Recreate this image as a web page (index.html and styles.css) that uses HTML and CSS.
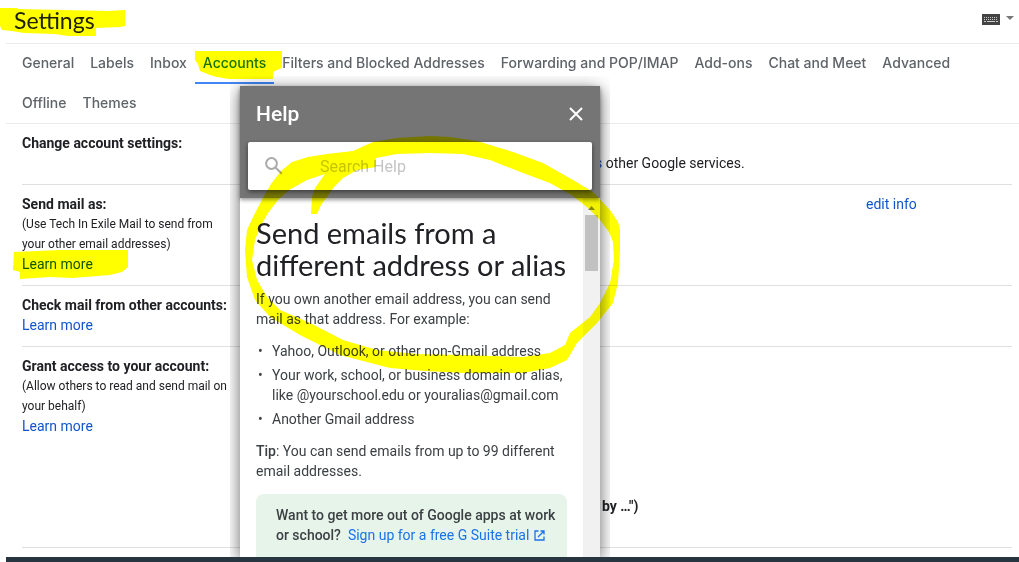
FILE: index.html
```html
<!DOCTYPE html>
<html lang="en">
<head>
  <meta charset="UTF-8">
  <meta name="viewport" content="width=device-width, initial-scale=1.0">
  <title>Settings - Accounts</title>
  <link rel="stylesheet" href="styles.css">
</head>
<body>
  <div class="page">
    <header class="top-bar">
      <h1>Settings</h1>
      <button class="input-tools" aria-label="Input tools">
        <svg width="18" height="12" viewBox="0 0 18 12">
          <rect width="18" height="11" fill="#444"/>
          <path d="M2 3.5h14M2 5.5h14" stroke="#ccc" stroke-width="1" stroke-dasharray="1 1"/>
          <path d="M2 7.5h2M5 7.5h8M14 7.5h2" stroke="#ccc"/>
        </svg>
        <svg width="8" height="5" viewBox="0 0 8 5"><path d="M0 0h8L4 4z" fill="#777"/></svg>
      </button>
    </header>

    <nav class="tabs">
      <a href="#">General</a>
      <a href="#">Labels</a>
      <a href="#">Inbox</a>
      <a href="#" class="active">Accounts</a>
      <a href="#">Filters and Blocked Addresses</a>
      <a href="#">Forwarding and POP/IMAP</a>
      <a href="#">Add-ons</a>
      <a href="#">Chat and Meet</a>
      <a href="#">Advanced</a>
      <a href="#">Offline</a>
      <a href="#">Themes</a>
    </nav>

    <main class="settings">
      <section class="row">
        <div class="label">
          <h2>Change account settings:</h2>
        </div>
        <p class="value second-line"><a href="#">s</a> other Google services.</p>
      </section>

      <section class="row">
        <div class="label">
          <h2>Send mail as:</h2>
          <p>(Use Tech In Exile Mail to send from your other email addresses)</p>
          <a href="#">Learn more</a>
        </div>
        <div class="action"><a href="#">edit info</a></div>
      </section>

      <section class="row">
        <div class="label">
          <h2>Check mail from other accounts:</h2>
          <a href="#">Learn more</a>
        </div>
      </section>

      <section class="row">
        <div class="label">
          <h2>Grant access to your account:</h2>
          <p>(Allow others to read and send mail on your behalf)</p>
          <a href="#">Learn more</a>
        </div>
        <p class="value sender">by …")</p>
      </section>
    </main>

    <footer class="bottom-bar"></footer>

    <div class="help-frame">
      <div class="help" role="dialog" aria-label="Help">
        <div class="help-header">
          <div class="help-title">
            <h2>Help</h2>
            <button aria-label="Close">
              <svg width="14" height="14" viewBox="0 0 14 14"><path d="M1 1l12 12M13 1L1 13" stroke="#fff" stroke-width="2"/></svg>
            </button>
          </div>
          <label class="search">
            <svg width="18" height="18" viewBox="0 0 18 18" fill="none" stroke="#aaa" stroke-width="2">
              <circle cx="6.5" cy="6.5" r="5.4"/>
              <path d="M10.5 10.5l6.3 6.3"/>
            </svg>
            <input type="text" placeholder="Search Help" aria-label="Search Help">
          </label>
        </div>
        <div class="help-body">
          <article>
            <h3>Send emails from a different address or alias</h3>
            <p>If you own another email address, you can send mail as that address. For example:</p>
            <ul>
              <li>Yahoo, Outlook, or other non-Gmail address</li>
              <li>Your work, school, or business domain or alias, like @yourschool.edu or youralias@gmail.com</li>
              <li>Another Gmail address</li>
            </ul>
            <p><b>Tip</b>: You can send emails from up to 99 different email addresses.</p>
            <div class="promo">
              <b>Want to get more out of Google apps at work or school?</b>&nbsp;
              <a href="#">Sign up for a free G Suite trial
                <svg width="12" height="11" viewBox="0 0 12 11" fill="none" stroke="#1a73e8" stroke-width="1.3"><path d="M5.5 1H2v9h9V6.5M7.5 1H11v3.5M11 1L5 7"/></svg></a>
            </div>
          </article>
          <div class="scrollbar">
            <svg width="7" height="4" viewBox="0 0 7 4"><path d="M0 4L3.5 0L7 4z" fill="#888"/></svg>
            <div class="thumb"></div>
          </div>
        </div>
      </div>
    </div>

    <!-- highlighter strokes -->
    <svg class="marker" width="640" height="400" viewBox="0 0 640 400" fill="#ff0">
      <path d="M0 8H17L18 9L108 11L125 10V26L120 27L96 28V36L68 36L55 34L24 33L12 31L2 30L0 26z"/>
      <path d="M195 51H282V68L277 70L273 72V79L229 79L217 77L210 75L200 71L198 64L195 60z"/>
      <path d="M14 252L60 250L128 250V267L122 272L110 275L85 277L72 278L50 277L20 279V272L13 270z"/>
      <path fill-rule="evenodd" d="M247 230L255 213L263 198L271 184L281 171L292 162L308 157L327 154L353 151L373 142L397 138L430 136L450 137L477 141L513 152L543 163L573 180L593 192L610 210L618 222L620 230V250L618 283L613 303L597 323L577 343L567 360L550 368L523 373H463L425 371L390 368L340 355L300 335L270 317L255 300L247 277L245 250z
        M252 260L255 240L260 227L268 213L278 200L289 190L307 180L325 174L315 188L312 197L311 214H317L321 205L327 197L334 187L343 178L357 170L376 167V158L397 154L430 153L463 154L490 160L523 173L550 183L573 196L588 208L600 220L609 232L613 242L614 260L610 283L600 303L590 317L570 333L565 345L550 353L523 357L463 355L417 354L377 350L343 340L310 323L280 310L267 297L257 280z"/>
    </svg>
  </div>
</body>
</html>
```

FILE: styles.css
```css
* {
  margin: 0;
  padding: 0;
  box-sizing: border-box;
}

body {
  font-family: Roboto, "Liberation Sans", sans-serif;
  font-size: 14px;
  line-height: 20px;
  color: #202124;
  background: #fff;
}

a {
  color: #1155cc;
  text-decoration: none;
}

button {
  border: none;
  background: none;
  cursor: pointer;
}

.page {
  position: relative;
  display: flex;
  flex-direction: column;
  min-height: 100vh;
  padding-left: 6px;
  overflow: hidden;
}

.top-bar {
  display: flex;
  align-items: center;
  justify-content: space-between;
  height: 44px;
  padding: 0 5px 3px 8px;
  border-bottom: 1px solid #ebebeb;
}

.top-bar h1 {
  font-family: Lato, sans-serif;
  font-size: 23px;
  font-weight: 400;
}

.input-tools {
  display: flex;
  gap: 6px;
}

.input-tools svg + svg {
  margin-top: 2px;
}

.tabs {
  display: flex;
  flex-wrap: wrap;
  padding: 0 40px 0 8px;
  box-shadow: inset 0 -1px #ebebeb;
}

.tabs a {
  height: 40px;
  padding: 9px 8px;
  font-family: Inter, sans-serif;
  font-size: 14px;
  font-weight: 500;
  color: #5f6368;
}

.tabs .active {
  color: #1a73e8;
  border-bottom: 2px solid #4285f4;
}

.settings {
  flex: 1;
  padding: 0 7px 9px 16px;
}

.row {
  display: grid;
  grid-template-columns: 573px 1fr 146px;
  padding: 9px 0 11px;
  border-bottom: 1px solid #e0e0e0;
}

.row h2 {
  font-size: 14px;
  font-weight: 700;
  white-space: nowrap;
}

.label {
  width: 210px;
}

.label p {
  font-size: 12px;
}

.second-line {
  padding-top: 20px;
}

.action {
  grid-column: 3;
}

.sender {
  padding: 140px 0 20px 7px;
  font-weight: 700;
}

.bottom-bar {
  height: 5px;
  background: #263540;
}

/* help popup */
.help-frame {
  position: absolute;
  top: 76px;
  bottom: 5px;
  left: 230px;
  width: 380px;
  padding: 10px 10px 0;
  overflow: hidden;
}

.help {
  display: flex;
  flex-direction: column;
  height: 100%;
  color: #3c4043;
  background: #fff;
  box-shadow: 0 4px 16px rgba(0, 0, 0, 0.6);
}

.help-header {
  position: relative;
  padding: 0 8px 8px;
  background: #757575;
  box-shadow: 0 2px 4px rgba(0, 0, 0, 0.4);
}

.help-title {
  display: flex;
  align-items: center;
  justify-content: space-between;
  height: 56px;
  padding: 0 9px 0 8px;
}

.help-title h2 {
  font-size: 21px;
  font-weight: 500;
  color: #fff;
}

.help-title button {
  display: flex;
}

.search {
  display: flex;
  align-items: center;
  gap: 37px;
  height: 48px;
  padding: 0 17px;
  background: #fff;
  border-radius: 2px;
  box-shadow: 0 2px 5px rgba(0, 0, 0, 0.5);
}

.search input {
  flex: 1;
  min-width: 0;
  border: none;
  outline: none;
  font-family: inherit;
  font-size: 16px;
}

.search input::placeholder {
  color: #c4c4c4;
}

.help-body {
  display: flex;
  flex: 1;
  min-height: 0;
}

article {
  flex: 1;
  padding: 19px 16px 0;
  overflow: hidden;
}

article h3 {
  margin-bottom: 8px;
  font-family: Lato, sans-serif;
  font-size: 29px;
  font-weight: 400;
  line-height: 32px;
  color: #202124;
}

article b {
  font-weight: 500;
}

article ul {
  margin: 12px 0;
  padding-left: 16px;
  list-style: none;
}

article li {
  margin-bottom: 4px;
}

article li::before {
  content: "•";
  float: left;
  margin-left: -14px;
}

.promo {
  height: 100px;
  margin-top: 13px;
  padding: 11px 0 0 20px;
  background: #e6f4ea;
  border-radius: 8px;
}

.promo a {
  color: #1a73e8;
}

.promo svg {
  vertical-align: -1px;
}

.scrollbar {
  width: 17px;
  padding: 8px 2px 0;
  background: #f1f1f1;
}

.scrollbar svg {
  display: block;
  margin: 0 auto 5px;
}

.thumb {
  height: 56px;
  background: #c1c1c1;
}

.marker {
  position: absolute;
  top: 0;
  left: 0;
  mix-blend-mode: multiply;
  pointer-events: none;
}
```
